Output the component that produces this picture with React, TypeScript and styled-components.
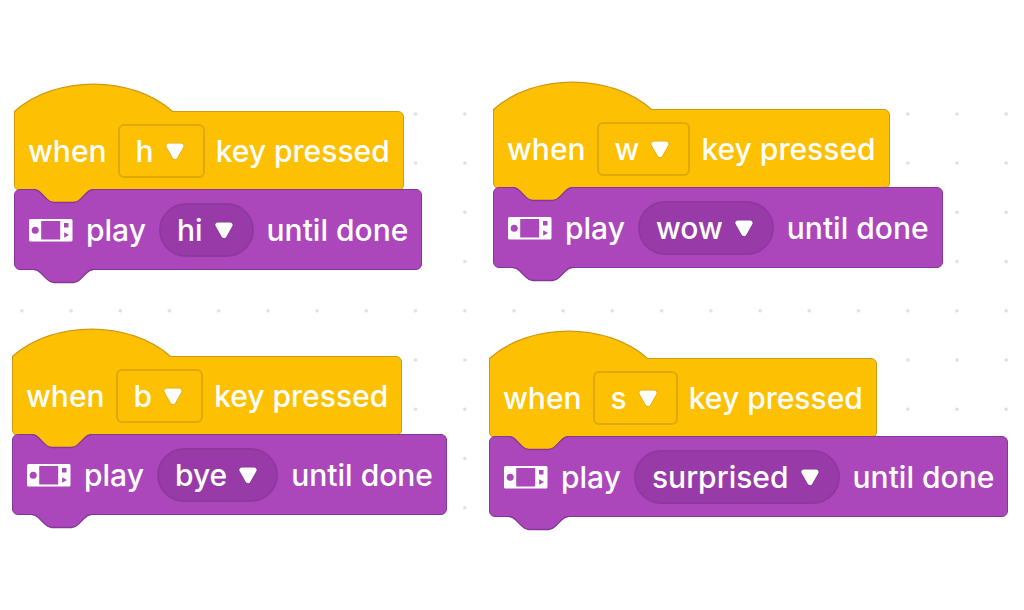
import React, { useState } from "react";
import styled, { createGlobalStyle } from "styled-components";

const GlobalStyle = createGlobalStyle`
  *, *::before, *::after { box-sizing: border-box; }
  body {
    margin: 0;
    background: #ffffff;
    font-family: Inter, "Liberation Sans", sans-serif;
  }
`;

type Tone = "event" | "sound";

const tones = {
  event: {
    fill: "#fec002",
    line: "#cf9a10",
    field: "#fec002",
    fieldLine: "#e0aa04",
    gap: 11,
    padding: "12px 13px",
    radius: "0 6px 6px 6px",
  },
  sound: {
    fill: "#ab47bb",
    line: "#86359a",
    field: "#983ba8",
    fieldLine: "#8f399f",
    gap: 13,
    padding: "13px 13px 12px",
    radius: "6px",
  },
};

const Workspace = styled.main`
  position: relative;
  min-height: 100vh;
  overflow: hidden;
`;

const DotGrid = styled.svg`
  display: block;
  width: 100%;
  height: 440px;
  margin-top: 90px;
`;

const Script = styled.section<{ $x: number; $y: number }>`
  position: absolute;
  left: ${(p) => p.$x}px;
  top: ${(p) => p.$y}px;
  display: flex;
  flex-direction: column;
  align-items: flex-start;
  padding-top: 28px;
`;

const Block = styled.div<{ $tone: Tone }>`
  position: relative;
  display: flex;
  align-items: center;
  gap: ${(p) => tones[p.$tone].gap}px;
  padding: ${(p) => tones[p.$tone].padding};
  border: 1px solid ${(p) => tones[p.$tone].line};
  border-radius: ${(p) => tones[p.$tone].radius};
  background: ${(p) => tones[p.$tone].fill};
  color: #ffffff;
  font-size: 30px;
  font-weight: 500;
  line-height: 54px;
  white-space: nowrap;

  & + & {
    margin-top: -2px;
  }
`;

const Hat = styled.svg`
  position: absolute;
  left: -1px;
  bottom: calc(100% - 2px);
`;

const Connector = styled.svg<{ $edge: "top" | "bottom" }>`
  position: absolute;
  left: 19px;
  top: ${(p) => (p.$edge === "top" ? "-1px" : "100%")};
`;

const Field = styled.label`
  position: relative;
  display: flex;
  align-items: center;
`;

const Select = styled.select<{ $tone: Tone }>`
  appearance: none;
  field-sizing: content;
  height: 54px;
  margin: 0;
  padding: 0 49px 0 16px;
  border: 2px solid ${(p) => tones[p.$tone].fieldLine};
  border-radius: ${(p) => (p.$tone === "event" ? 6 : 27)}px;
  background: ${(p) => tones[p.$tone].field};
  color: inherit;
  font: inherit;
  line-height: 36px;
  cursor: pointer;
`;

const Arrow = styled.svg`
  position: absolute;
  right: 20px;
  pointer-events: none;
`;

const Device = styled.svg`
  flex: none;
  margin-left: 1px;
`;

function HatShape() {
  return (
    <Hat width="162" height="31" viewBox="0 0 162 31" aria-hidden="true">
      <path d="M0.5 31V28.5C41.5 -8 117.500 -8 158.500 28.5V31Z" fill={tones.event.fill} />
      <path
        d="M0.5 31V28.5C41.5 -8 117.500 -8 158.500 28.5"
        fill="none"
        stroke={tones.event.line}
        strokeWidth="1.300"
      />
    </Hat>
  );
}

function ConnectorShape({ edge, fill }: { edge: "top" | "bottom"; fill: string }) {
  const d =
    "M0 .5C3.300 .5 5 2.150 6.600 3.800L13.200 10.400C14.850 12.050 16.500 13.500 19.800 13.500H39.600C42.900 13.500 44.550 12.050 46.200 10.400L52.800 3.800C54.450 2.150 56.100 .5 59.400 .5";
  return (
    <Connector $edge={edge} width="60" height="15" viewBox="0 0 60 15" aria-hidden="true">
      <path d={d + "V0H0Z"} fill={fill} />
      <path d="M3 0H56L54 2H5Z" fill={fill} />
      <path d={d} fill="none" stroke={tones.sound.line} strokeWidth="1.300" />
    </Connector>
  );
}

function DeviceIcon() {
  return (
    <Device width="44" height="23" viewBox="0 0 44 23" aria-hidden="true">
      <rect width="43.500" height="22.500" rx="1.500" fill="#fff" />
      <rect x="12.200" y="2" width="19" height="18.500" rx=".6" fill={tones.sound.fill} />
      <circle cx="6.200" cy="11.200" r="3.500" fill={tones.sound.fill} />
      <rect x="35" y="4" width="4.500" height="4.500" fill={tones.sound.fill} />
      <path d="M35.200 13.200V18.800L40 16Z" fill={tones.sound.fill} />
    </Device>
  );
}

function DropDown({
  tone,
  label,
  options,
  initial,
}: {
  tone: Tone;
  label: string;
  options: string[];
  initial: string;
}) {
  const [value, setValue] = useState(initial);
  return (
    <Field>
      <Select $tone={tone} aria-label={label} value={value} onChange={(e) => setValue(e.target.value)}>
        {options.map((o) => (
          <option key={o}>{o}</option>
        ))}
      </Select>
      <Arrow width="20" height="20" viewBox="0 0 20 20" aria-hidden="true">
        <g strokeLinejoin="round">
          <path d="M3.900 5H16.100L10 15.700Z" stroke="#000" strokeOpacity=".12" strokeWidth="6.500" fill="none" />
          <path d="M3.900 5H16.100L10 15.700Z" stroke="#fff" strokeWidth="5" fill="#fff" />
        </g>
      </Arrow>
    </Field>
  );
}

const keys = ["h", "w", "b", "s"];
const sounds = ["hi", "wow", "bye", "surprised"];

const scripts = [
  { x: 14, y: 83, keyName: "h", sound: "hi" },
  { x: 493, y: 81, keyName: "w", sound: "wow" },
  { x: 12, y: 328, keyName: "b", sound: "bye" },
  { x: 489, y: 330, keyName: "s", sound: "surprised" },
];

export default function App() {
  return (
    <>
      <GlobalStyle />
      <Workspace>
        <DotGrid aria-hidden="true">
          <defs>
            <pattern id="dots" x="-3" y="-1" width="49.220" height="49.220" patternUnits="userSpaceOnUse">
              <circle cx="24.800" cy="24.800" r="1.700" fill="#dedede" />
            </pattern>
          </defs>
          <rect width="100%" height="100%" fill="url(#dots)" />
        </DotGrid>
        {scripts.map((s) => (
          <Script key={s.keyName} $x={s.x} $y={s.y}>
            <Block $tone="event">
              <HatShape />
              <span>when</span>
              <DropDown tone="event" label="Key" options={keys} initial={s.keyName} />
              <span>key pressed</span>
            </Block>
            <Block $tone="sound">
              <ConnectorShape edge="top" fill={tones.event.fill} />
              <DeviceIcon />
              <span>play</span>
              <DropDown tone="sound" label="Sound" options={sounds} initial={s.sound} />
              <span>until done</span>
              <ConnectorShape edge="bottom" fill={tones.sound.fill} />
            </Block>
          </Script>
        ))}
      </Workspace>
    </>
  );
}
